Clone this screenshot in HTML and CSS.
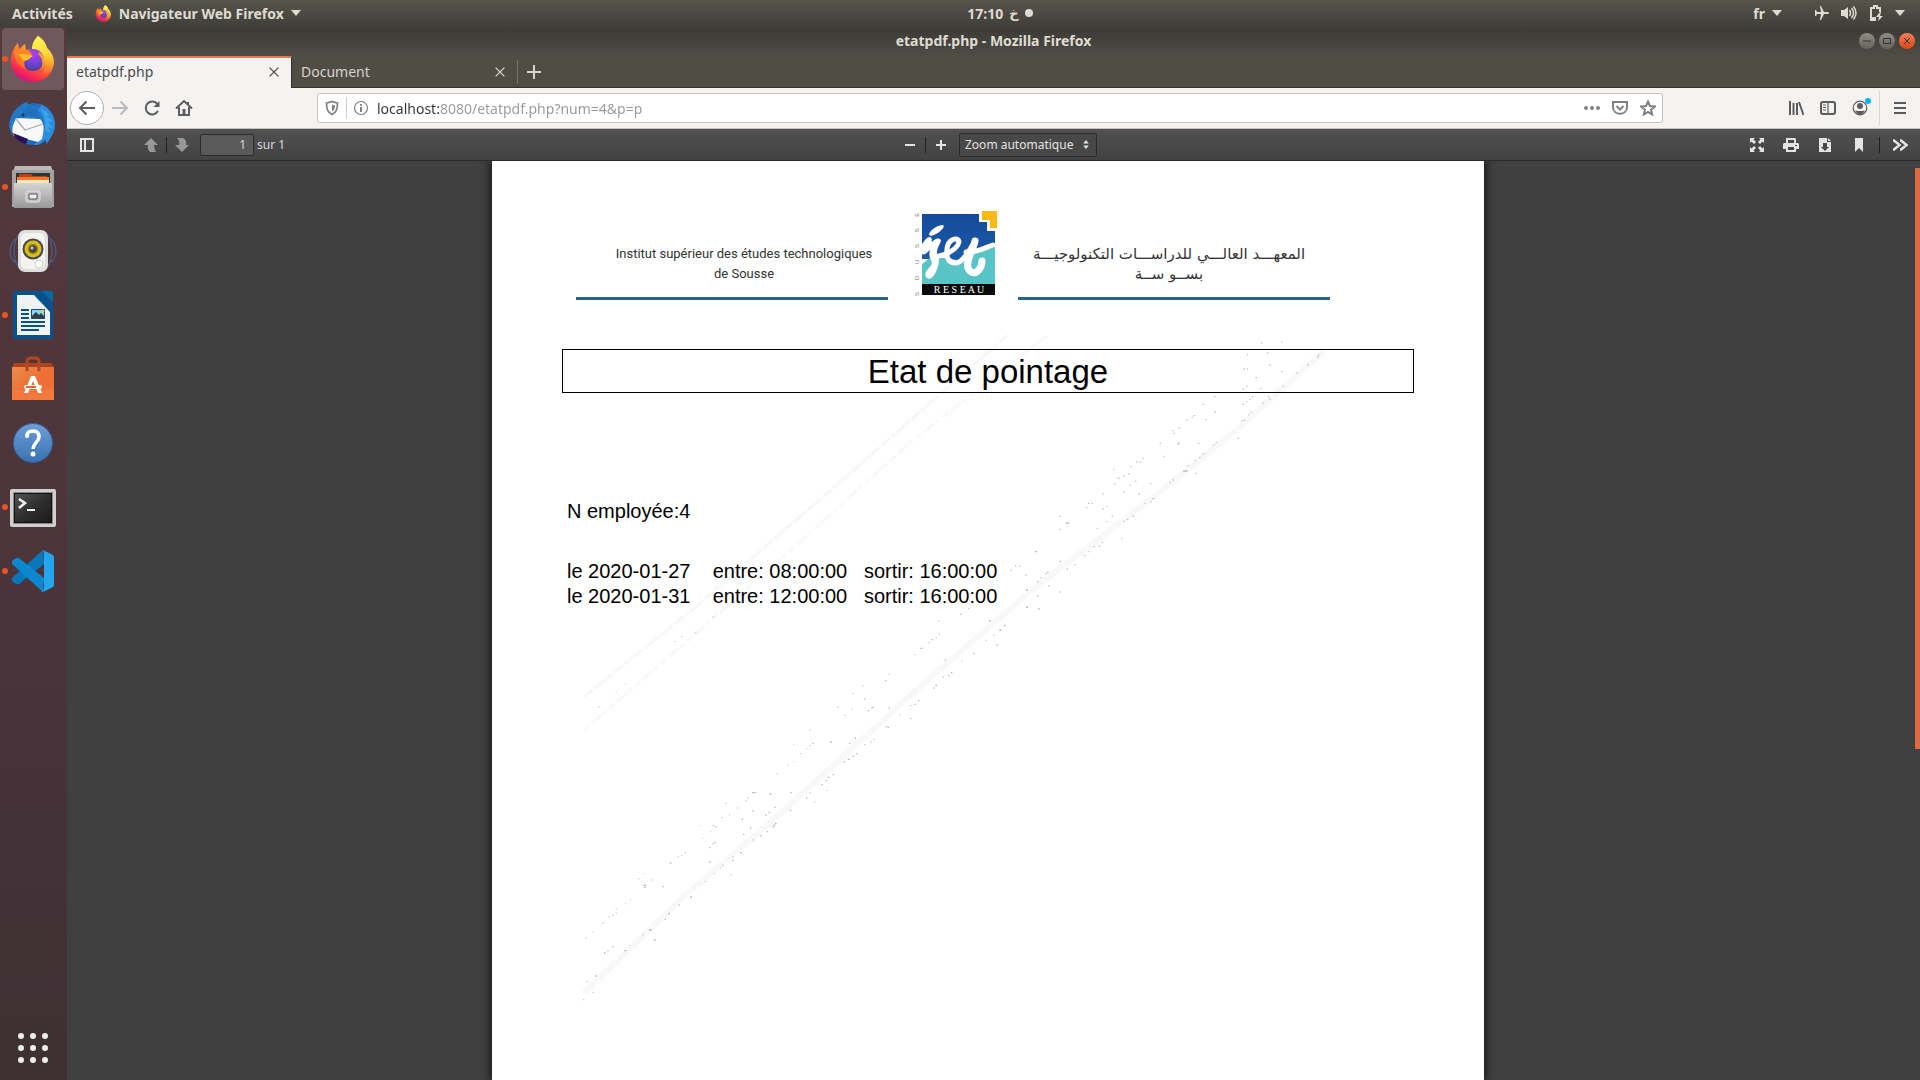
FILE: index.html
```html
<!DOCTYPE html>
<html lang="fr">
<head>
<meta charset="utf-8">
<title>etatpdf.php - Mozilla Firefox</title>
<link rel="stylesheet" href="styles.css">
</head>
<body>
<svg class="defs" aria-hidden="true">
  <defs>
    <linearGradient id="fxBody" x1=".8" y1=".05" x2=".3" y2="1"><stop offset="0" stop-color="#fff44f"/><stop offset=".3" stop-color="#ffb02a"/><stop offset=".6" stop-color="#ff5a35"/><stop offset=".85" stop-color="#f5225a"/><stop offset="1" stop-color="#c8108c"/></linearGradient>
    <linearGradient id="fxFlame" x1=".4" y1="0" x2=".6" y2="1"><stop offset="0" stop-color="#fff556"/><stop offset=".5" stop-color="#ffd93a"/><stop offset="1" stop-color="#ff9a2e" stop-opacity=".2"/></linearGradient>
    <radialGradient id="fxGlobe" cx=".55" cy=".2" r=".8"><stop offset="0" stop-color="#b43cf5"/><stop offset=".5" stop-color="#7a44dd"/><stop offset="1" stop-color="#4a3f96"/></radialGradient>
    <linearGradient id="fxHead" x1="0" y1="0" x2="0" y2="1"><stop offset="0" stop-color="#ff8a1f"/><stop offset="1" stop-color="#ff6a2d"/></linearGradient>
    <linearGradient id="tbBlue" x1="0" y1="0" x2="1" y2="1"><stop offset="0" stop-color="#1d63ad"/><stop offset=".5" stop-color="#2478d0"/><stop offset="1" stop-color="#1b4f9d"/></linearGradient>
    <linearGradient id="grey" x1="0" y1="0" x2="0" y2="1"><stop offset="0" stop-color="#d4d4d4"/><stop offset="1" stop-color="#989898"/></linearGradient>
    <linearGradient id="bag" x1="0" y1="0" x2="1" y2="1"><stop offset="0" stop-color="#ea8d50"/><stop offset=".5" stop-color="#ee6e32"/><stop offset="1" stop-color="#f0743c"/></linearGradient>
    <linearGradient id="help" x1="0" y1="0" x2="0" y2="1"><stop offset="0" stop-color="#6f9dd8"/><stop offset="1" stop-color="#3873b0"/></linearGradient>
    <linearGradient id="term" x1="0" y1="0" x2="1" y2="1"><stop offset="0" stop-color="#555"/><stop offset=".5" stop-color="#2e2e2e"/><stop offset="1" stop-color="#1b1b1b"/></linearGradient>
    <linearGradient id="isetTop" x1="0" y1="0" x2="0" y2="1"><stop offset="0" stop-color="#154a9b"/><stop offset="1" stop-color="#1b5aa8"/></linearGradient>
    <symbol id="firefox" viewBox="0 0 48 48">
      <path fill="url(#fxBody)" d="M29 1C35 5 37 9 38 13C42 17 45 21 45 28C44 39 35 47 24 47C11 47 2 38 2 26C2 18 5 12 9 8L10 14C12 13 14 10 16 9L17 15C20 14 22 14 24 14C23 9 26 4 29 1Z"/>
      <path fill="url(#fxFlame)" d="M29 1C35 5 37 9 38 13C42 17 45 21 45 28C43 36 38 39 34 39C38 30 36 22 31 18C27 16 24 16 23 14C23 8 26 4 29 1Z"/>
      <circle cx="24" cy="25" r="11" fill="url(#fxGlobe)"/>
      <path fill="url(#fxHead)" d="M5 16C9 13 13 15 17 15C20 15 22 17 23 20C20 21 17 22 16 25C15 27 15 31 17 34C10 32 5 25 5 16Z"/>
      <path fill="#ffbd29" d="M9 19C15 19 20 19 24 21C20 24 18 26 14 26C13 23 11 21 9 19Z"/>
      <path fill="#ff9e28" d="M30 17C36 20 37 28 33 34C34 27 33 22 29 19Z"/>
    </symbol>
    <symbol id="close" viewBox="0 0 16 16"><path d="M3 3l10 10M13 3L3 13" stroke="currentColor" stroke-width="1.6" fill="none"/></symbol>
    <symbol id="caret" viewBox="0 0 10 6"><path d="M0 0h10L5 6z" fill="currentColor"/></symbol>
  </defs>
</svg>

<header class="panel">
  <div class="panel-left">
    <a class="panel-link" href="#">Activités</a>
    <button class="panel-link app-menu" type="button"><svg class="i17"><use href="#firefox"/></svg>Navigateur Web Firefox<svg class="caret"><use href="#caret"/></svg></button>
  </div>
  <div class="clock"><time>17:10</time><span lang="ar">خ</span><i class="clock-dot"></i></div>
  <div class="panel-right">
    <button class="panel-link lang" type="button">fr<svg class="caret"><use href="#caret"/></svg></button>
    <button class="panel-link status" type="button" aria-label="Système">
      <svg class="i16" viewBox="0 0 16 16"><path fill="currentColor" d="M7 1l3 6h4q2 1 0 2h-4l-3 6H6l1-6H3l-1 2H1V5h1l1 2h4L6 1z"/></svg>
      <svg class="i16" viewBox="0 0 16 16"><path fill="currentColor" d="M0 5h3l4-3v12l-4-3H0z"/><path fill="none" stroke="currentColor" stroke-width="1.5" d="M8.500 5q2 3 0 6M10.500 3q4 5 0 10M12.500 1.500q5 6.500 0 13"/></svg>
      <svg class="i16" viewBox="0 0 16 16"><path fill="none" stroke="currentColor" stroke-width="2" d="M8 15H3V3h3V1h3v2h3v4"/><path fill="currentColor" d="M12 7l-4 5h3l-1 4 5-5h-3l1-4zM4 12h4v2H4z"/></svg>
      <svg class="caret"><use href="#caret"/></svg>
    </button>
  </div>
</header>

<div class="desktop">
  <nav class="dock" aria-label="Applications">
    <a class="app active running" href="#" aria-label="Firefox"><svg class="i48"><use href="#firefox"/></svg></a>
    <a class="app" href="#" aria-label="Thunderbird"><svg class="i48" viewBox="0 0 48 48">
      <circle cx="25" cy="25" r="21" fill="url(#tbBlue)"/><path fill="#2f8bdc" d="M33 6C45 11 50 27 42 38L38 45L36 40C30 49 20 46 29 43C37 36 38 20 29 11Z"/>
      <path fill="#2379c6" d="M0 27C1 12 11 5 20 2C17 4 18 5 22 6C29 9 31 16 30 20L6 22L3 36Z"/><path fill="#38a5e8" d="M31 9l10 7-3 1 6 5-5 1 5 6-5-1 2 6-5-3C37 22 36 16 31 9Z"/>
      <path fill="#f8f8fa" d="M7 19L31 20C36 25 35 31 33 40L29 43L5 37C3 33 3 30 4 26Z"/><path fill="#2170be" d="M5 23L19 7C27 10 31 15 30 20L21 16L7 20Z"/>
      <path d="M7 20L16 31L34 25" fill="none" stroke="#aaa" stroke-width="1.300"/><circle cx="14" cy="16" r="1.500" fill="#253044"/><path fill="#27115c" d="M4 34l15 6-2 5C10 43 6 39 4 34z"/></svg></a>
    <a class="app running" href="#" aria-label="Fichiers"><svg class="i48" viewBox="0 0 48 48">
      <path fill="#b9b9b9" d="M6 3h36l2 6H4z"/><path fill="#a2a2a2" d="M3 7h42v37H3z"/><path fill="#333" d="M7 10h34v12H7z"/><path fill="#b64216" d="M10 11h12l2 2h14v9H10z"/><path fill="#f07a2c" d="M8 14h32v8H8z"/><path fill="#f7e6ba" d="M8 17h32v3H8z"/>
      <path fill="url(#grey)" d="M5 20h38v25H5z"/><rect x="17" y="28" width="14" height="11" rx="2" fill="#c4c4c4" stroke="#e1e1e1"/><path d="M20 31h8v5h-8z" fill="#eee" stroke="#555"/></svg></a>
    <a class="app" href="#" aria-label="Rhythmbox"><svg class="i48" viewBox="0 0 48 48">
      <path fill="none" stroke="#4f5478" stroke-width="1.500" d="M6 12Q-4 24 6 36M9 8Q1 24 9 40M42 12Q52 24 42 36M39 8Q47 24 39 40"/><rect x="9" y="3" width="30" height="42" rx="7" fill="#dededc"/><rect x="12" y="6" width="24" height="36" rx="5" fill="#f3f3f1"/><circle cx="24" cy="22" r="10.500" fill="#484848"/><circle cx="24" cy="22" r="8.500" fill="#d6bb21"/><circle cx="24" cy="22" r="5" fill="#8b7913"/><circle cx="24" cy="22" r="3.500" fill="#454545"/><circle cx="23" cy="21" r="1.500" fill="#ccc"/><circle cx="30" cy="37" r="4" fill="#fff" stroke="#ccc"/></svg></a>
    <a class="app running" href="#" aria-label="LibreOffice Writer"><svg class="i48" viewBox="0 0 48 48">
      <path fill="#05538c" d="M6 0h26l12 13v33q0 2-2 2H6q-2 0-2-2V2q0-2 2-2z"/><path fill="#0369a3" d="M32 0h10q2 0 2 2v10z"/><path fill="#f2f2f2" d="M8 4h17l16 17v23H8z"/><path stroke="#05538c" stroke-width="2" d="M12 19h8M12 23h8M12 27h8M12 31h24M12 35h24M12 39h18"/><path fill="#05538c" d="M22 18h14v10H22z"/><path fill="#8cd4f0" d="M23 19h12v8H23z"/><path fill="#363f40" d="M23 27v-2l4-4 3 3 2-2 3 3v2z"/><circle cx="34" cy="20" r="1.500" fill="#f6c83d"/></svg></a>
    <a class="app" href="#" aria-label="Logiciels Ubuntu"><svg class="i48" viewBox="0 0 48 48">
      <path fill="#a8431d" d="M5 8h38l2 5H3z"/><path fill="url(#bag)" d="M3 12h42v33H3z"/><path fill="#f58246" d="M3 35h42v10H3z" opacity=".5"/><path d="M18 16V7q0-4 4-4h4q4 0 4 4v9" fill="none" stroke="#b54720" stroke-width="3"/><path d="M22 21h4l7 17h-4l-5-12-5 12h-4z" fill="#fff"/><rect x="15" y="30" width="18" height="4" rx="2" fill="#fff"/><path d="M17 32h10" stroke="#e86630" stroke-width="2"/></svg></a>
    <a class="app" href="#" aria-label="Aide"><svg class="i48" viewBox="0 0 48 48">
      <circle cx="24" cy="24" r="19.500" fill="url(#help)" stroke="#2c639c"/><path d="M18 17q0-5 6-5t6 6c0 5-6 6-6 12" fill="none" stroke="#fff" stroke-width="3.500"/><circle cx="18" cy="17" r="2" fill="#fff"/><circle cx="24" cy="35" r="2.500" fill="#fff"/></svg></a>
    <a class="app running" href="#" aria-label="Terminal"><svg class="i48" viewBox="0 0 48 48">
      <rect x="1" y="6" width="46" height="38" rx="2" fill="#cfcfcd"/><path fill="#8b8b89" d="M4 9h40v32H4z"/><path fill="#111" d="M5 10h38v30H5z"/><path fill="url(#term)" d="M6 11h36v28H6z"/><path d="M10 16l6 4-6 5" fill="none" stroke="#f2f2f2" stroke-width="2.500"/><path d="M18 27h8" stroke="#f2f2f2" stroke-width="2"/></svg></a>
    <a class="app running" href="#" aria-label="Visual Studio Code"><svg class="i48" viewBox="0 0 48 48">
      <path fill="#0877b9" d="M34 3L3 31v3l4 3h3L35 17z"/><path fill="#0b87d0" d="M34 45L3 17v-3l4-3h3l25 20z"/><path fill="#25a4f0" d="M33 3q2 0 3 1l8 4q1 1 1 2v28q0 1-1 2l-8 4q-2 1-4 0 3 0 3-3V7q0-4-2-4z"/></svg></a>
    <button class="app-grid" type="button" aria-label="Afficher les applications"><svg width="30" height="30" viewBox="0 0 30 30"><path d="M3 3h.01M15 3h.01M27 3h.01M3 15h.01M15 15h.01M27 15h.01M3 27h.01M15 27h.01M27 27h.01" stroke="#f0eeec" stroke-width="6" stroke-linecap="round"/></svg></button>
  </nav>

  <div class="window">
    <div class="titlebar">
      <h1 class="window-title">etatpdf.php - Mozilla Firefox</h1>
      <div class="window-buttons">
        <button class="wbtn" type="button" aria-label="Réduire"><svg viewBox="0 0 16 16"><path d="M4 8h8"/></svg></button>
        <button class="wbtn" type="button" aria-label="Agrandir"><svg viewBox="0 0 16 16"><path d="M4.500 5.500h7v5h-7z"/></svg></button>
        <button class="wbtn wbtn-close" type="button" aria-label="Fermer"><svg viewBox="0 0 16 16"><path d="M5 5l6 6M11 5l-6 6"/></svg></button>
      </div>
    </div>

    <div class="tabs">
      <div class="tab current"><a href="#">etatpdf.php</a><button type="button" aria-label="Fermer l’onglet"><svg class="i16"><use href="#close"/></svg></button></div>
      <div class="tab"><a href="#">Document</a><button type="button" aria-label="Fermer l’onglet"><svg class="i16"><use href="#close"/></svg></button></div>
      <button class="new-tab" type="button" aria-label="Nouvel onglet"><svg class="i16" viewBox="0 0 16 16"><path d="M8 1v14M1 8h14" stroke="currentColor" stroke-width="2"/></svg></button>
    </div>

    <div class="navbar">
      <div class="nav-buttons">
        <button class="nbtn back" type="button" aria-label="Précédent"><svg class="i18" viewBox="0 0 18 18"><path d="M17 9H2M8.500 2.500L2 9l6.500 6.500"/></svg></button>
        <button class="nbtn dim" type="button" aria-label="Suivant"><svg class="i18" viewBox="0 0 18 18"><path d="M1 9h15M9.500 2.500L16 9l-6.500 6.500"/></svg></button>
        <button class="nbtn" type="button" aria-label="Actualiser"><svg class="i18" viewBox="0 0 18 18"><path d="M14.500 5A6.500 6.500 0 1 0 15 12"/><path d="M16.500 2v6h-6z" class="solid"/></svg></button>
        <button class="nbtn" type="button" aria-label="Accueil"><svg class="i18" viewBox="0 0 18 18"><path d="M1 9.500L9 2l8 7.500M4 8v8h10V8M13 3v3"/><path class="solid" d="M7.500 10h3v5h-3z"/></svg></button>
      </div>
      <div class="urlbar">
        <svg class="i16 glyph" viewBox="0 0 16 16"><path d="M8 1.500q3 1 5.500 1.500c0 6-1 9-5.500 11.500C3.500 12 2.500 9 2.500 3Q5 2.500 8 1.500z" stroke-width="1.700"/><path class="solid" d="M8 4.500l3 1c0 3-1 5-3 6z"/></svg>
        <span class="url-sep"></span>
        <svg class="i16 glyph" viewBox="0 0 16 16"><circle cx="8" cy="8" r="6.500" stroke-width="1.200"/><path d="M8 7v5M8 4v1.800"/></svg>
        <input class="url" type="text" aria-label="Adresse" value="localhost:8080/etatpdf.php?num=4&amp;p=p">
        <div class="url-actions">
          <button class="ubtn" type="button" aria-label="Actions"><svg class="i16" viewBox="0 0 16 16"><path d="M2 8h.01M8 8h.01M14 8h.01" stroke-width="4" stroke-linecap="round"/></svg></button>
          <button class="ubtn" type="button" aria-label="Pocket"><svg class="i16" viewBox="0 0 16 16"><path d="M1 2h14v5c0 9-14 9-14 0z"/><path d="M4.500 6L8 9.500 11.500 6"/></svg></button>
          <button class="ubtn" type="button" aria-label="Marque-page"><svg class="i16" viewBox="0 0 16 16"><path d="M8 1.500l2 4.500 5 .5-4 3.300 1.200 4.700L8 12l-4.200 2.500L5 9.800 1 6.500 6 6z"/></svg></button>
        </div>
      </div>
      <div class="nav-tools">
        <button class="nbtn" type="button" aria-label="Bibliothèque"><svg class="i16" viewBox="0 0 16 16"><path d="M2 1v14M5.500 3v12M9 3v12M11 2l4.500 13"/></svg></button>
        <button class="nbtn" type="button" aria-label="Barre latérale"><svg class="i16" viewBox="0 0 16 16"><rect x="1" y="2" width="14" height="12" rx="2"/><path d="M8 2v12M3 5h3M3 7.500h3M3 10h3" stroke-width="1.200"/></svg></button>
        <button class="nbtn account" type="button" aria-label="Compte"><svg class="i16" viewBox="0 0 16 16"><circle cx="8" cy="8" r="6.800" stroke-width="1.200"/><circle class="solid" cx="8" cy="6" r="3"/><path class="solid" d="M3 10.500q5 1 10 0-2 4-5 4t-5-4z"/></svg></button>
        <button class="nbtn menu" type="button" aria-label="Menu"><svg class="i16" viewBox="0 0 16 16"><path d="M2 3h12M2 8h12M2 13h12"/></svg></button>
      </div>
    </div>

    <div class="pdfbar">
      <div class="pdf-left">
        <button class="pbtn" type="button" aria-label="Volet latéral"><svg class="i16" viewBox="0 0 16 16"><path fill="currentColor" fill-rule="evenodd" d="M1 1h14v14H1zM3 3v10h2V3zM7 3v10h6V3z"/></svg></button>
        <div class="pdf-arrows">
          <button class="pbtn off" type="button" aria-label="Page précédente"><svg class="i16" viewBox="0 0 16 16"><path fill="currentColor" d="M8 1l7 7h-4q0 4 2 7H7q-3-3-2-7H1z"/></svg></button>
          <span class="psep"></span>
          <button class="pbtn off" type="button" aria-label="Page suivante"><svg class="i16" viewBox="0 0 16 16"><path fill="currentColor" d="M8 15l7-7h-3q1-5-3-7H3q3 3 2 7H1z"/></svg></button>
        </div>
        <label class="page-count"><input type="text" value="1" aria-label="Page"><span>sur 1</span></label>
      </div>
      <div class="pdf-zoom">
        <button class="pbtn" type="button" aria-label="Zoom arrière"><svg class="i12" viewBox="0 0 12 12"><path d="M1 6h10" stroke="currentColor" stroke-width="2"/></svg></button>
        <span class="psep"></span>
        <button class="pbtn" type="button" aria-label="Zoom avant"><svg class="i12" viewBox="0 0 12 12"><path d="M1 6h10M6 1v10" stroke="currentColor" stroke-width="2"/></svg></button>
        <div class="select-box">
          <select aria-label="Zoom"><option>Zoom automatique</option></select>
          <svg class="updown" viewBox="0 0 6 10"><path fill="currentColor" d="M0 4l3-4 3 4zM0 6h6l-3 4z"/></svg>
        </div>
      </div>
      <div class="pdf-right">
        <button class="pbtn" type="button" aria-label="Présentation"><svg class="i16" viewBox="0 0 16 16"><path fill="currentColor" d="M1 1h5L4.500 2.500 7 5 5 7 2.500 4.500 1 6zM15 1h-5l1.500 1.500L9 5l2 2 2.500-2.500L15 6zM1 15h5l-1.500-1.500L7 11 5 9l-2.500 2.500L1 10zM15 15h-5l1.500-1.500L9 11l2-2 2.500 2.500L15 10z"/></svg></button>
        <button class="pbtn" type="button" aria-label="Imprimer"><svg class="i16" viewBox="0 0 16 16"><path fill="currentColor" fill-rule="evenodd" d="M3 1h9l1 1v4h2l1 1v5h-3v3H3v-3H0V7l1-1h2zM5 3v3h6V3zM5 10v3h6v-3zM12 8v1h2V8z"/></svg></button>
        <button class="pbtn" type="button" aria-label="Télécharger"><svg class="i16" viewBox="0 0 16 16"><path fill="currentColor" fill-rule="evenodd" d="M2 1h8v4h4v10H2zM6 6v4H4l4 4 4-4h-2V6zM11 1l3 3h-3z"/></svg></button>
        <button class="pbtn" type="button" aria-label="Signet"><svg class="i16" viewBox="0 0 16 16"><path fill="currentColor" d="M4 1h8v14l-4-4-4 4z"/></svg></button>
        <span class="psep"></span>
        <button class="pbtn more" type="button" aria-label="Outils"><svg class="i16" viewBox="0 0 16 16"><path d="M1 3.500h1L7.500 8 2 12.500H1M8 3.500h1L14.500 8 9 12.500H8" fill="none" stroke="currentColor" stroke-width="2.500"/></svg></button>
      </div>
    </div>

    <main class="viewer">
      <article class="sheet">
        <svg class="watermark" width="992" height="919" viewBox="0 0 992 919" aria-hidden="true">
          <path d="M831 191L740 273 660 337 540 429 430 524 280 660 190 737 92 832" stroke="#f9f7f8" stroke-width="6" fill="none" stroke-dasharray="19 1 27 1"/>
          <path d="M92 536L200 449 340 328 420 258 516 174" stroke="#f7f7f7" stroke-width="3" fill="none" stroke-dasharray="11 2 5 1 17 3"/>
          <path d="M92 569L200 476 300 388 420 280 556 174" stroke="#f9f9f9" stroke-width="3" fill="none" stroke-dasharray="7 3 13 2 5 4"/>
          <g transform="translate(68 439) scale(.33333)" stroke="#d5c9ce" stroke-width="4" fill="none">
            <path d="M76 1015h4M97 997h3M128 969h4M146 950h4M156 945h4M167 927h3M167 938h3M195 911h3M209 899h3M235 836h4M251 821h3M272 840h3M328 789h7M353 770h4M363 766h4M374 759h4M419 677h3M426 715h3M451 695h3M458 677h5M466 681h5M485 653h4M496 610h4M507 645h3M531 624h4M556 602h4M563 594h4M587 578h3M650 521h4M682 496h4M700 434h3M700 485h3M720 461h4M738 446h4M748 437h4M748 391h4M756 430h6M832 321h4M853 346h4M874 328h4M878 281h4M907 257h4M912 297h4M974 242h6M986 223h4M1063 164h4M1080 145h10M1105 128h4M1134 63h4M1136 102h4M1127 113h4M1224 26h4M80 1145h4M97 1177h4M69 1199h4M209 1036h4M248 1005h4M281 1020h7M356 915h4M433 845h4M461 821h4M480 803h3M486 796h6M517 771h4M512 824h4M577 720h4M748 578h4M762 606h4M800 571h4M912 434h4M931 426h4M940 418h4M976 380h6M1018 344h4M1050 317h4M1050 356h5M1148 231h4M1204 184h4M1277 121h4M1299 105h4M1309 135h5M1434 26h4M167 277h3M195 251h3M115 321h4M342 125h4M363 110h4M405 97h4M458 50h4"/>
            <path stroke="#c2b3ba" d="M132 1059h4M142 1052h4M157 1040h4M105 1128h5M193 1052h6M267 990h8M314 958h4M324 941h6M391 891h5M308 860h4M250 856h9M252 862h5M447 786h5M447 743h4M458 731h4M464 727h4M549 703h4M570 684h4M545 657h4M577 633h4M577 578h8M629 582h5M626 637h4M616 645h4M643 622h4M692 578h4M637 680h5M641 675h5M645 670h5M601 707h5M540 758h6M517 781h5M619 695h4M689 631h5M738 594h4M784 555h4M797 542h4M803 532h5M818 524h4M851 486h4M863 478h6M877 469h5M888 461h4M867 430h4M884 414h4M811 426h5M923 332h5M934 323h7M986 324h4M983 382h4M1074 302h4M1064 313h4M1120 264h4M1126 256h5M1165 227h4M1173 218h4M1239 160h4M1154 180h4M1115 119h4M1200 43h4M1287 63h5M1318 90h6M1332 76h5M1399 22h5"/>
          </g>
          <g transform="translate(508 159) scale(.33333)" stroke="#cdbcc3" stroke-width="4" fill="none">
            <path d="M951 111h5M954 105h4M921 134h5M889 159h4M848 199h4M843 155h4M808 135h4M801 99h4M843 65h4M783 69h4M741 104h3M731 147h4M741 146h3M766 173h5M780 206h4M738 199h4M728 207h4M727 253h5M738 245h4M748 238h4M755 230h5M804 230h4M808 238h4M787 249h4M643 230h4M643 276h5M608 253h4M615 299h4M575 292h4M581 287h5M559 300h4M535 324h4M517 332h4M520 340h4M532 373h4M535 369h4M594 370h4M489 409h4M479 370h4M427 415h4M409 426h4M419 426h4M391 440h4M384 461h4M370 468h4M353 475h6M339 448h4M342 492h4M405 484h4M388 496h4M370 516h4M415 522h5M451 491h4M318 559h4M307 567h4M335 589h4M318 605h4M290 625h4M264 550h4M275 550h4M307 522h4M259 563h4M198 609h10M178 589h4M178 628h4M104 695h7M178 724h6M141 757h5M136 762h4M121 773h4M111 785h5M78 810h6M76 765h4M45 738h4M58 738h4M31 750h4M111 828h4M78 861h6M144 797h4M115 867h4M178 816h4M200 747h4M223 734h4M265 695h4M252 707h4M280 680h5M296 679h5M304 667h4M363 656h4M370 604h4M380 599h5M398 589h5M433 550h4M451 545h4M457 536h7M507 487h4M517 480h4M549 453h14M562 437h4M584 421h4M597 413h5M608 402h4M587 460h4M640 374h4M647 367h4M713 355h4M724 303h4M731 300h4M745 284h4M752 277h4"/>
          </g>
        </svg>

        <header class="letterhead">
          <p class="org org-fr">Institut supérieur des études technologiques<br>de Sousse</p>
          <svg class="logo" width="90" height="88" viewBox="0 0 90 88" role="img" aria-label="ISET Réseau">
            <path fill="url(#isetTop)" d="M8 4h57v8h8v9h8v28H8z"/>
            <path fill="#59c4c6" d="M8 54l13-10q14 4 24 5l36-14v39H8z"/>
            <path fill="#1b5aa8" d="M30 45c6-6 24-3 30-9l-2 12q-14 6-28-3z"/>
            <path fill="#fdb813" d="M68 1h15v17h-7v-8h-8z"/>
            <path fill="#0a0a0a" d="M8 74h73v11H8z"/>
            <g fill="#fff"><path d="M15 24C17 19 24 15 29 15C32 17 25 23 20 25C17 26 15 26 15 24Z"/>
              <path d="M8 34C10 32 12 27 16 27C19 28 17 31 18 32C21 29 24 27 27 30C27 33 23 37 23 43C26 50 25 54 23 59C20 68 15 71 12 67C9 61 17 58 18 53C17 49 14 47 16 40C13 42 11 46 8 44Z"/></g>
            <g fill="none" stroke="#fff" stroke-linecap="round" stroke-linejoin="round"><path stroke-width="5" d="M25 46C31 45 43 40 45 32C44 26 34 29 33 39C32 49 35 53 42 53C50 52 56 39 61 31"/><path stroke-width="7" d="M61 31C59 41 50 53 55 60C62 68 68 57 68 51"/><path stroke-width="5" d="M52 42C62 43 70 38 79 35"/></g>
            <text x="45" y="83" text-anchor="middle" class="logo-name">R E S E A U</text>
            <text class="logo-side" transform="translate(5 86) rotate(-90)">S&#160;&#160;&#160;&#160;&#160;&#160;&#160;O&#160;&#160;&#160;&#160;&#160;&#160;&#160;U&#160;&#160;&#160;&#160;&#160;&#160;&#160;S&#160;&#160;&#160;&#160;&#160;&#160;&#160;S&#160;&#160;&#160;&#160;&#160;&#160;&#160;E</text>
          </svg>
          <p class="org org-ar" lang="ar" dir="rtl">المعهـــد العالـــي للدراســـات التكنولوجيـــة<br>بســو ســة</p>
        </header>

        <h2 class="doc-title">Etat de pointage</h2>
        <p class="employee">N employée:4</p>
        <p class="entries">le 2020-01-27    entre: 08:00:00   sortir: 16:00:00
le 2020-01-31    entre: 12:00:00   sortir: 16:00:00</p>
      </article>
      <div class="scroll-thumb"></div>
    </main>
  </div>
</div>
</body>
</html>
```
FILE: styles.css
```css
* { box-sizing: border-box; }
html, body { height: 100%; }
body {
  margin: 0;
  display: flex;
  flex-direction: column;
  overflow: hidden;
  background: #404040;
  font-family: "Noto Sans", "Open Sans", sans-serif;
  font-size: 14px;
}
button { margin: 0; padding: 0; border: 0; background: none; color: inherit; font: inherit; }
a { color: inherit; text-decoration: none; }
h1, h2, p { margin: 0; font-weight: normal; }
svg { display: block; flex: none; }
input, select { font: inherit; color: inherit; }

.defs { position: absolute; width: 0; height: 0; }
.i12 { width: 12px; height: 12px; }
.i16 { width: 16px; height: 16px; }
.i17 { width: 17px; height: 17px; }
.i18 { width: 18px; height: 18px; }
.i48 { width: 48px; height: 48px; }
.caret { width: 10px; height: 6px; }

/* Top panel */
.panel {
  flex: none;
  display: grid;
  grid-template-columns: 1fr auto 1fr;
  align-items: center;
  height: 28px;
  padding-bottom: 2px;
  background: linear-gradient(#57544b, #3f3e39);
  color: #dfdbd2;
  font-weight: bold;
  font-size: 14px;
}
.panel-left { display: flex; gap: 22px; padding-left: 12px; }
.panel-link { display: flex; align-items: center; gap: 7px; white-space: nowrap; }
.clock { display: flex; align-items: center; gap: 6px; padding-left: 80px; }
.clock span { font-family: "DejaVu Sans", sans-serif; font-size: 13px; }
.clock-dot { width: 8px; height: 8px; border-radius: 50%; background: #dfdbd2; }
.panel-right { display: flex; justify-content: flex-end; gap: 32px; padding-right: 15px; }
.status { gap: 11px; }

.desktop { flex: 1; display: flex; min-height: 0; }

/* Dock */
.dock {
  flex: none;
  display: flex;
  flex-direction: column;
  gap: 2px;
  width: 67px;
  padding: 0 3px 17px 2px;
  background: linear-gradient(#523a3f, #50363b 30%, #47333a 65%, #3d3133);
}
.app {
  position: relative;
  display: flex;
  align-items: center;
  justify-content: center;
  height: 62px;
  border-radius: 4px;
}
.app.active { background: #70585c; }
.app.running::before {
  content: "";
  position: absolute;
  left: 0;
  top: 28px;
  width: 6px;
  height: 6px;
  border-radius: 50%;
  background: #e95420;
}
.app-grid { margin-top: auto; align-self: center; }

/* Window */
.window { flex: 1; display: flex; flex-direction: column; min-width: 0; }
.titlebar {
  flex: none;
  display: flex;
  align-items: center;
  justify-content: center;
  position: relative;
  height: 28px;
  padding-bottom: 4px;
  background: linear-gradient(#3b3a36, #4f4c45);
  color: #dfdbd2;
}
.window-title { font-size: 14px; font-weight: bold; }
.window-buttons { position: absolute; right: 5px; top: 5px; display: flex; gap: 4px; }
.wbtn { width: 16px; height: 16px; border-radius: 50%; background: linear-gradient(#8f8c84, #64625b); }
.wbtn-close { background: linear-gradient(#f58055, #dd4814); }
.wbtn svg { fill: none; stroke: #33322e; stroke-width: 1; }

.tabs { flex: none; display: flex; height: 32px; background: #504d45; color: #d8d4cb; border-bottom: 1px solid #33322e; }
.tab { display: flex; align-items: center; justify-content: space-between; width: 225px; padding: 0 9px; }
.tab.current { height: 32px; padding-bottom: 3px; background: #f4f3f2; color: #4c4c4c; border-top: 2px solid #f07746; border-right: 1px solid #33322e; }
.tab button svg { padding: 1px; }
.new-tab { align-self: center; height: 24px; padding: 0 8px; border-left: 1px solid #77746c; }

.navbar {
  flex: none;
  display: flex;
  align-items: center;
  height: 41px;
  padding-left: 3px;
  background: #f4f3f2;
  color: #5c5c5c;
  border-bottom: 1px solid #c5c1bd;
}
.nav-buttons { flex: 1 1 0; display: flex; align-items: center; }
.nbtn { display: flex; align-items: center; justify-content: center; width: 32px; height: 34px; }
.nbtn svg, .ubtn svg, .glyph { fill: none; stroke: currentColor; stroke-width: 2; }
.solid { fill: currentColor; stroke: none; }
.back { width: 34px; border: 1px solid #b2b0ae; border-radius: 50%; background: #fff; }
.dim { color: #bbb; }
.urlbar {
  flex: 0 1 1346px;
  display: flex;
  align-items: center;
  gap: 6px;
  height: 30px;
  margin-right: 10px;
  padding: 0 6px;
  border: 1px solid #c4c1be;
  border-radius: 3px;
  background: #fff;
  color: #808080;
}
.url-sep { width: 1px; height: 22px; background: #ccc; }
.url {
  flex: 1;
  min-width: 0;
  padding: 0 0 0 2px;
  border: 0;
  outline: 0;
  color: transparent;
  background: linear-gradient(90deg, #333 65px, #999 65px);
  -webkit-background-clip: text;
  background-clip: text;
}
.url-actions { display: flex; gap: 12px; }
.nav-tools { flex: 1 1 0; display: flex; align-items: center; justify-content: flex-end; }
.account { position: relative; }
.account::after {
  content: "";
  position: absolute;
  right: 5px;
  top: 7px;
  width: 6px;
  height: 6px;
  border-radius: 50%;
  background: #00b3f4;
}
.menu { width: 41px; margin-left: 3px; border-left: 1px solid #d8d6d4; }

/* PDF viewer toolbar */
.pdfbar {
  flex: none;
  display: grid;
  grid-template-columns: 1fr auto 1fr;
  align-items: center;
  height: 32px;
  padding: 0 12px;
  background: linear-gradient(#505050, #434343);
  border-bottom: 1px solid #2a2a2a;
  color: #e4e4e4;
  font-size: 12px;
}
.pdf-left, .pdf-arrows, .page-count, .pdf-zoom, .pdf-right { display: flex; align-items: center; }
.pdf-arrows { margin-left: 48px; gap: 7px; }
.off { color: #989898; }
.psep { width: 1px; height: 16px; background: #222; }
.page-count { gap: 3px; margin-left: 10px; color: #d9d9d9; }
.page-count input {
  width: 54px;
  height: 22px;
  padding: 0 7px;
  text-align: right;
  border: 1px solid #2c2c2c;
  border-radius: 2px;
  background: #5a5a5a;
}
.pdf-zoom { gap: 9px; padding-left: 14px; }
.select-box { position: relative; display: flex; margin-left: 3px; }
.select-box select {
  appearance: none;
  width: 138px;
  height: 24px;
  padding: 0 5px;
  border: 1px solid #2c2c2c;
  border-radius: 2px;
  background: #484848;
}
.updown { position: absolute; right: 8px; top: 7px; width: 6px; height: 9px; }
.pdf-right { justify-content: flex-end; gap: 18px; }
.pdf-right .psep { margin-left: -6px; }
.more { margin-left: -6px; }

/* Document */
.viewer {
  flex: 1;
  min-height: 0;
  position: relative;
  overflow: hidden;
  display: flex;
  justify-content: center;
  padding-right: 11px;
  background: #404040;
}
.scroll-thumb { position: absolute; right: 0; top: 7px; bottom: 36%; width: 5px; background: #de6a45; }
.sheet {
  position: relative;
  width: 992px;
  min-height: 100%;
  padding: 49px 70px 0;
  background: #fff;
  box-shadow: 0 0 8px 2px #1a1a1a;
  color: #000;
  font-family: "Liberation Sans", Arial, sans-serif;
  font-size: 20px;
  line-height: 25px;
}
.watermark { position: absolute; left: 0; top: 0; }
.letterhead, .doc-title, .employee, .entries { position: relative; }
.letterhead { display: flex; align-items: flex-start; padding-left: 14px; }
.org {
  width: 312px;
  height: 90px;
  padding-top: 34px;
  border-bottom: 3px solid #27618e;
  text-align: center;
  color: #333;
  font-size: 13px;
  line-height: 20px;
}
.org-fr { padding-left: 24px; font-family: Roboto, sans-serif; }
.org-ar { padding-right: 10px; font-family: "DejaVu Sans", sans-serif; font-size: 15px; }
.logo { margin: 0 14px 0 26px; }
.logo-name { font-family: "Liberation Serif", serif; font-size: 10px; fill: #fff; }
.logo-side { font-family: "Liberation Sans", sans-serif; font-size: 6px; fill: #777; }
.doc-title {
  height: 44px;
  margin-top: 49px;
  border: 1px solid #000;
  text-align: center;
  font-size: 33px;
  line-height: 44px;
}
.employee { margin: 106px 0 35px 5px; }
.entries { margin-left: 5px; white-space: pre; }
```
